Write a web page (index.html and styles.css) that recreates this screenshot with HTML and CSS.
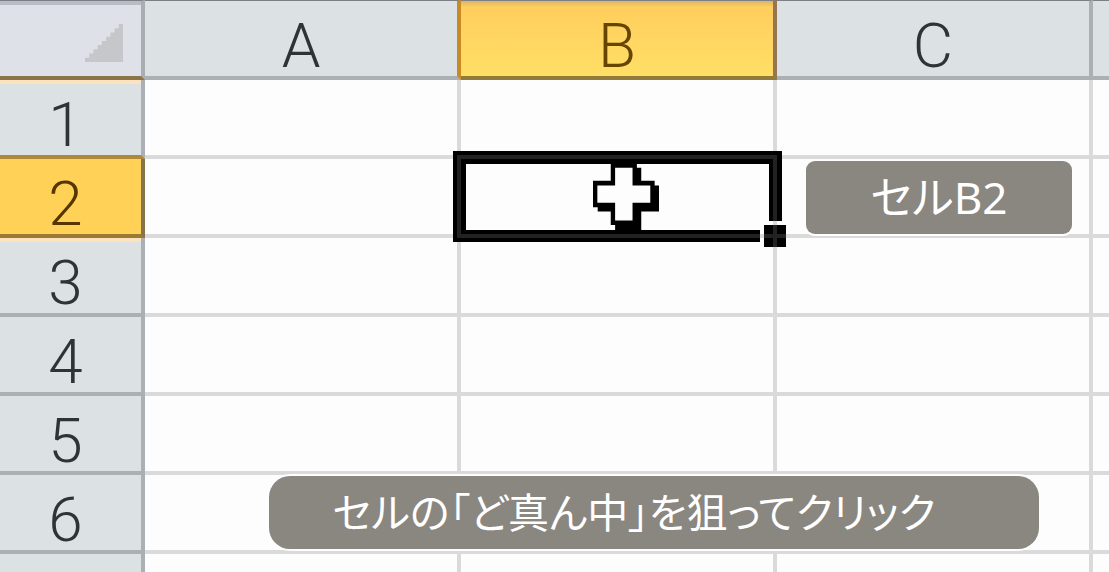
FILE: index.html
```html
<!DOCTYPE html>
<html lang="ja">
<head>
<meta charset="utf-8">
<meta name="viewport" content="width=device-width, initial-scale=1">
<title>セルB2</title>
<link rel="stylesheet" href="styles.css">
</head>
<body>
<main class="sheet">
  <table class="grid">
    <colgroup><col class="col-head"><col class="col"><col class="col"><col class="col"><col></colgroup>
    <thead>
      <tr>
        <td class="corner"><svg class="corner-mark" viewBox="0 0 9 9" aria-hidden="true"><path d="M9 0V9H0V8H1V7H2V6H3V5H4V4H5V3H6V2H7V1H8V0Z"/></svg></td>
        <th scope="col" class="before-active">A</th>
        <th scope="col" class="active-col">B</th>
        <th scope="col">C</th>
        <th scope="col"></th>
      </tr>
    </thead>
    <tbody>
      <tr><th scope="row" class="glow above-active">1</th><td></td><td></td><td></td><td></td></tr>
      <tr>
        <th scope="row" class="active-row">2</th>
        <td></td>
        <td class="cell">
          <svg class="selection" viewBox="0 0 333 96" aria-hidden="true">
            <path d="M0 0H329V70H316V13H13V79H307V91H0Z"/>
            <path d="M311 74H333V96H311Z"/>
            <path class="seam" d="M4 4H324V70H320V8H8V83H307V87H4ZM320 74H324V96H320ZM311 83H333V87H311Z"/>
          </svg>
          <svg class="cursor" viewBox="459 490 197 200" aria-hidden="true">
            <path d="M512 490H590V504H603V543H643V557H656V635H603V690H525V675H512V635H473V622H459V543H512Z"/>
            <path class="cursor-fill" d="M525 504H577V557H630V609H577V662H525V609H472V557H525Z"/>
          </svg>
        </td>
        <td class="cell"><span class="label tag">セルB2</span></td>
        <td></td>
      </tr>
      <tr><th scope="row" class="glow">3</th><td></td><td></td><td></td><td></td></tr>
      <tr><th scope="row">4</th><td></td><td></td><td></td><td></td></tr>
      <tr><th scope="row">5</th><td></td><td></td><td></td><td></td></tr>
      <tr><th scope="row">6</th><td></td><td></td><td></td><td></td></tr>
      <tr><th scope="row"></th><td></td><td></td><td></td><td></td></tr>
    </tbody>
  </table>
  <p class="label caption">セルの「ど真ん中」を狙ってクリック</p>
</main>
</body>
</html>
```
FILE: styles.css
```css
* { box-sizing: border-box; }

body {
  margin: 0;
  background: #fdfdfd;
  font-family: Roboto, "Liberation Sans", "Noto Sans CJK JP", sans-serif;
}

.sheet {
  position: relative;
  height: 100vh;
  overflow: hidden;
}

.grid {
  width: 100%;
  table-layout: fixed;
  border-collapse: separate;
  border-spacing: 0;
}

.col-head { width: 145px; }
.col { width: 316px; }

.grid td,
.grid th {
  height: 79px;
  padding: 0;
  border: solid #dadada;
  border-width: 0 4px 4px 0;
}

.grid th {
  border-color: #aab0b3;
  background: #dce1e4;
  color: #2d3337;
  font-size: 62px;
  font-weight: 300;
  line-height: 60px;
}

.grid tbody th { padding: 14px 10px 0 0; }

.grid thead th,
.grid .corner {
  height: 80px;
  border-top: 1px solid #7b7f84;
}

.grid thead th { padding-top: 14px; }

.grid th:last-child,
.grid td:last-child { border-right: 0; }

.grid .corner {
  border-right-color: #aaaeb3;
  border-bottom-color: #8b7448;
  background: #dfe1e9;
  box-shadow: inset 0 4px #b9bcc4;
}

.corner-mark {
  display: block;
  width: 38px;
  height: 38px;
  margin: 8px 18px 0 auto;
  fill: #c6c7ca;
}

.grid .before-active { border-right-color: #c88a25; }

.grid .active-col {
  border-right-color: #967552;
  border-bottom-color: #927a38;
  background: linear-gradient(#dcb46b, #ffce5d 8%, #ffdf66);
  color: #664500;
}

.grid .glow { box-shadow: inset 0 4px #fce2bd; }
.grid .above-active { border-bottom-color: #ae883b; }

.grid .active-row {
  border-right-color: #87734b;
  border-bottom-color: #9c7a35;
  background: #ffd157;
  color: #553600;
}

.grid .cell { position: relative; }

.selection {
  position: absolute;
  z-index: 1;
  top: -8px;
  left: -8px;
  width: 333px;
  height: 96px;
}

.seam { fill: #222; }

.cursor {
  position: absolute;
  z-index: 1;
  top: 4px;
  left: 132px;
  width: 66px;
  height: 67px;
}

.cursor-fill { fill: #fdfdfd; }

.label {
  display: flex;
  align-items: center;
  justify-content: center;
  height: 73px;
  margin: 0;
  background: #8a8680;
  box-shadow: 0 0 0 2px #fdfdfd;
  color: #fff;
  font-family: "Noto Sans", "Noto Sans CJK JP", sans-serif;
  font-weight: 400;
  font-feature-settings: "palt";
  line-height: 60px;
  white-space: nowrap;
}

.tag {
  position: absolute;
  top: 2px;
  left: 29px;
  width: 266px;
  padding-bottom: 2px;
  border-radius: 9px;
  font-size: 44px;
}

.caption {
  position: absolute;
  top: 476px;
  left: 269px;
  width: 770px;
  padding: 0 40px 2px 0;
  border-radius: 21px;
  font-size: 41px;
}
```
